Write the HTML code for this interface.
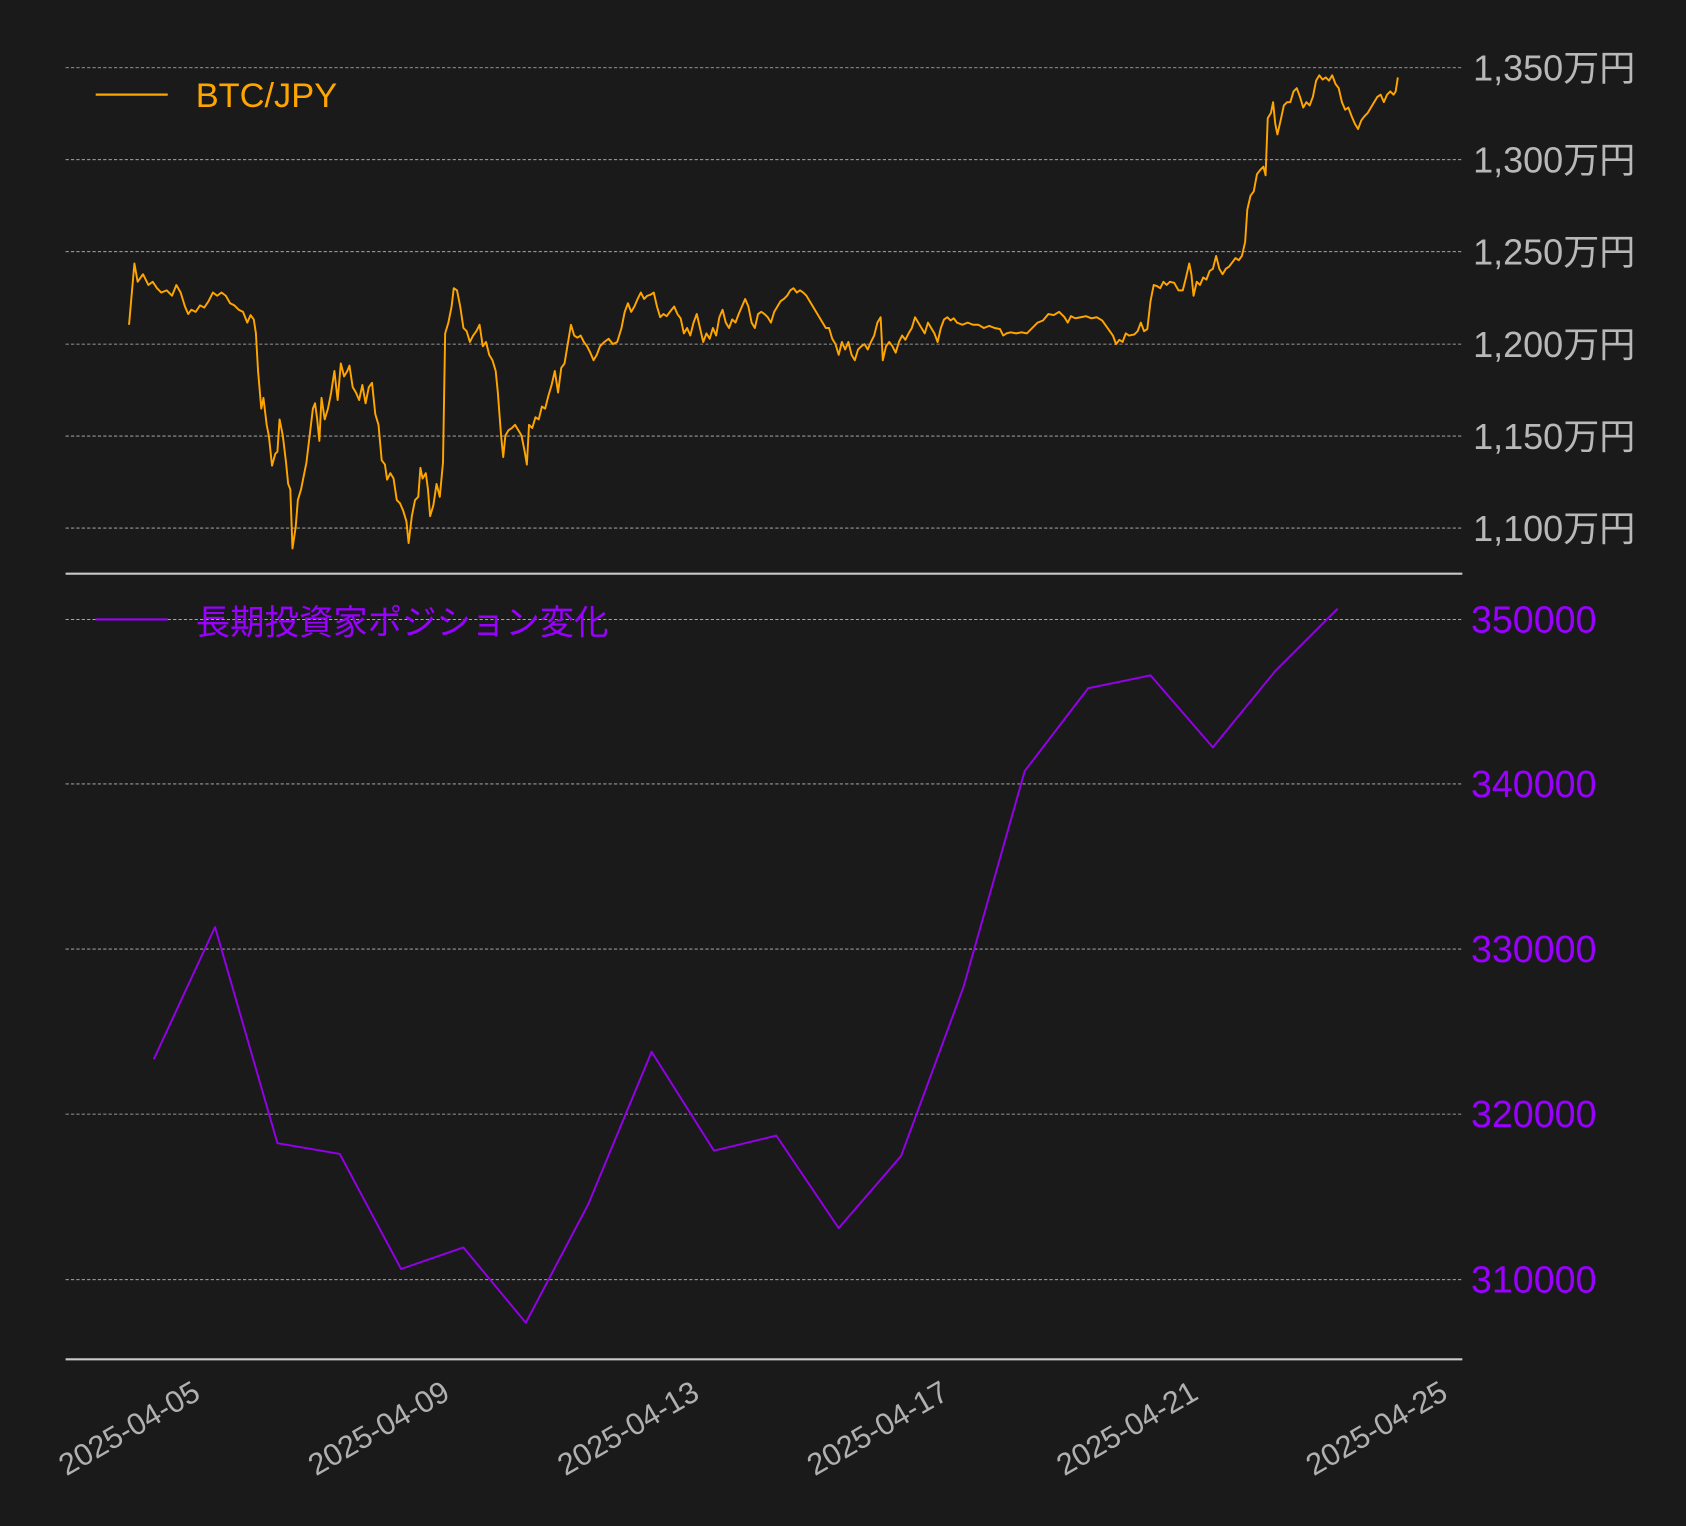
<!DOCTYPE html>
<html><head><meta charset="utf-8"><style>
html,body{margin:0;padding:0;background:#1a1a1a;}
svg{display:block;}
text{font-family:"Liberation Sans","Noto Sans CJK JP",sans-serif;}
</style></head><body>
<svg width="1686" height="1526" viewBox="0 0 1568 1419" preserveAspectRatio="none" xmlns="http://www.w3.org/2000/svg">
<rect width="1568" height="1419" fill="#1a1a1a"/>
<g stroke="#bbbbbb" stroke-width="0.8" stroke-dasharray="3,2">
<line x1="61" x2="1360" y1="63" y2="63"/>
<line x1="61" x2="1360" y1="148.5" y2="148.5"/>
<line x1="61" x2="1360" y1="234" y2="234"/>
<line x1="61" x2="1360" y1="320" y2="320"/>
<line x1="61" x2="1360" y1="405.5" y2="405.5"/>
<line x1="61" x2="1360" y1="491" y2="491"/>
<line x1="61" x2="1360" y1="576" y2="576"/>
<line x1="61" x2="1360" y1="729" y2="729"/>
<line x1="61" x2="1360" y1="882.5" y2="882.5"/>
<line x1="61" x2="1360" y1="1036" y2="1036"/>
<line x1="61" x2="1360" y1="1190" y2="1190"/>
</g>
<line x1="61" x2="1360" y1="533.5" y2="533.5" stroke="#c8c8c8" stroke-width="2"/>
<line x1="61" x2="1360" y1="1264" y2="1264" stroke="#c8c8c8" stroke-width="2"/>
<g fill="#b8b8b8" font-size="33.5">
<text x="1370" y="75">1,350万円</text>
<text x="1370" y="160.5">1,300万円</text>
<text x="1370" y="246">1,250万円</text>
<text x="1370" y="332">1,200万円</text>
<text x="1370" y="417.5">1,150万円</text>
<text x="1370" y="503">1,100万円</text>
</g>
<g fill="#9900ff" font-size="35">
<text x="1368" y="588">350000</text>
<text x="1368" y="741">340000</text>
<text x="1368" y="894.5">330000</text>
<text x="1368" y="1048">320000</text>
<text x="1368" y="1202">310000</text>
</g>
<g fill="#b0b0b0" font-size="28.5" text-anchor="end">
<text transform="translate(188,1300) rotate(-30)">2025-04-05</text>
<text transform="translate(420,1300) rotate(-30)">2025-04-09</text>
<text transform="translate(652,1300) rotate(-30)">2025-04-13</text>
<text transform="translate(884,1300) rotate(-30)">2025-04-17</text>
<text transform="translate(1116,1300) rotate(-30)">2025-04-21</text>
<text transform="translate(1348,1300) rotate(-30)">2025-04-25</text>
</g>
<line x1="89" x2="156" y1="88" y2="88" stroke="#ffa500" stroke-width="2"/>
<text x="182" y="99.5" fill="#ffa500" font-size="32">BTC/JPY</text>
<line x1="89" x2="156" y1="576" y2="576" stroke="#9900ff" stroke-width="2"/>
<text x="182" y="590" fill="#9900ff" font-size="32">長期投資家ポジション変化</text>
<polyline fill="none" stroke="#ffa500" stroke-width="1.8" stroke-linejoin="round" points="120,302 125,245 128,262 133,255 138,265 142,262 146,268 150,272 155,270 160,275 164,265 168,272 172,285 175,292 178,288 182,290 186,284 190,286 194,280 198,272 202,275 206,272 210,275 214,282 218,284 222,288 226,290 230,300 233,293 236,297 238,310 240,345 243,380 245,370 248,395 250,405 253,433 256,422 258,420 260,390 263,405 266,430 268,450 270,455 272,510 275,490 277,465 280,455 282,445 285,430 288,405 291,380 293,375 295,390 297,410 299,370 302,390 305,380 308,365 311,345 314,372 317,338 320,350 323,345 325,340 328,360 331,365 334,372 337,358 340,375 343,360 346,356 349,385 352,395 355,428 358,432 360,446 363,440 366,445 369,465 372,468 375,475 378,485 380,505 383,480 386,465 389,462 391,435 393,445 396,440 398,455 400,480 403,470 406,450 409,462 412,430 414,310 417,300 420,285 422,268 425,270 428,285 431,305 434,308 437,318 440,312 443,308 446,302 449,322 452,318 455,330 458,335 461,345 463,365 466,405 468,425 470,405 473,400 476,398 479,395 482,400 485,405 488,420 490,432 492,395 495,398 498,388 501,390 504,378 507,380 510,368 513,358 516,345 519,365 522,342 525,338 528,320 531,302 534,312 537,314 540,312 543,318 546,322 549,328 552,335 555,330 558,322 562,318 566,315 570,320 574,318 578,305 581,290 584,282 587,290 590,285 593,278 596,272 599,278 602,275 605,274 608,272 611,285 614,295 617,292 620,294 623,290 627,285 630,292 633,296 636,310 639,305 642,312 645,300 648,292 651,305 654,318 657,310 660,315 663,305 666,312 669,295 672,288 675,300 678,305 681,297 684,300 687,292 690,285 693,278 696,285 699,300 702,305 705,292 708,290 711,292 714,295 717,300 720,290 723,285 726,280 729,278 732,275 735,270 738,268 741,272 744,270 747,272 750,275 753,280 756,285 759,290 762,295 765,300 768,305 771,305 774,315 777,320 780,330 783,318 786,325 789,318 792,330 795,335 798,325 801,322 804,320 807,325 810,318 813,312 816,300 819,295 821,335 824,322 827,318 830,322 833,328 836,318 839,312 842,316 845,310 848,305 851,295 854,300 857,305 860,310 863,300 866,305 869,310 872,318 875,305 878,297 881,295 884,298 887,296 890,300 895,302 900,300 905,302 910,302 915,305 920,303 925,305 930,306 933,312 936,310 940,309 945,310 950,309 955,310 960,305 965,300 970,298 975,292 980,293 985,290 990,295 993,300 996,294 1000,296 1005,295 1010,294 1015,296 1020,295 1025,298 1030,305 1035,312 1038,320 1041,316 1044,318 1047,310 1050,312 1055,311 1058,308 1061,300 1064,308 1067,306 1070,280 1073,265 1076,266 1079,268 1082,262 1085,265 1088,262 1092,263 1096,270 1100,270 1103,258 1106,245 1108,255 1110,275 1113,262 1116,265 1119,258 1122,260 1125,252 1128,250 1131,238 1134,250 1137,255 1140,250 1143,248 1146,244 1149,240 1152,242 1155,238 1158,225 1160,195 1163,182 1166,178 1169,162 1172,158 1175,155 1177,163 1179,110 1182,105 1184,95 1186,115 1188,125 1191,112 1194,98 1197,95 1200,95 1203,85 1206,82 1209,90 1212,100 1215,95 1218,98 1221,90 1224,75 1227,70 1230,74 1233,72 1236,75 1239,70 1242,78 1245,82 1248,95 1251,102 1254,100 1257,108 1260,115 1263,120 1266,112 1269,108 1272,105 1275,100 1278,95 1281,90 1284,88 1287,95 1290,88 1293,85 1296,88 1298,85 1300,72"/>
<polyline fill="none" stroke="#9400e8" stroke-width="1.8" stroke-linejoin="round" points="143,985 200,862 258,1063 316,1073 373,1180 431,1160 489,1230 547,1120 606,978 664,1070 722,1056 780,1142 838,1075 896,918 953,717 1012,640 1070,628 1128,695 1186,624 1244,566"/>
</svg>
</body></html>
